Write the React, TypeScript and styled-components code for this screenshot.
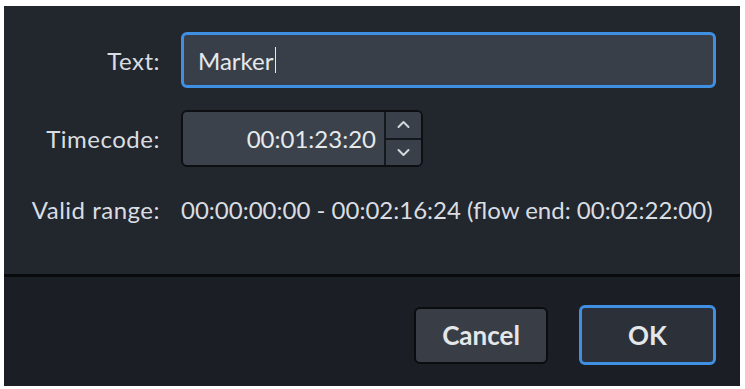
import React from "react";
import styled, { createGlobalStyle } from "styled-components";

const Global = createGlobalStyle`
  html, body { margin: 0; padding: 0; background: #ffffff; }
  body { font-family: "Lato", "Open Sans", sans-serif; }
`;

const Dialog = styled.div`
  margin: 6px 0 0 4px;
  width: 736px;
  height: 380px;
  display: flex;
  flex-direction: column;
  background: #22272d;
  color: #d9dde2;
`;

const Body = styled.div`
  flex: 1;
  display: grid;
  grid-template-columns: 130px 1fr;
  grid-auto-rows: min-content;
  column-gap: 21px;
  align-items: center;
  padding: 26px 24px 0 26px;
  row-gap: 22px;
`;

const Label = styled.div`
  font-size: 24px;
  letter-spacing: 0.5px;
  text-align: right;
  white-space: nowrap;
`;

const TextInput = styled.div`
  height: 56px;
  box-sizing: border-box;
  border: 3px solid #3f90e3;
  border-radius: 6px;
  background: #393f48;
  display: flex;
  align-items: center;
  padding-left: 14px;
  font-size: 24px;
  color: #e6e9ec;
`;

const Caret = styled.span`
  display: inline-block;
  width: 1px;
  height: 26px;
  background: #e6e9ec;
  margin-left: 1px;
`;

const Spin = styled.div`
  width: 242px;
  height: 57px;
  box-sizing: border-box;
  border: 2px solid #0d0f12;
  border-radius: 6px;
  background: #3b424b;
  display: flex;
  overflow: hidden;
`;

const SpinValue = styled.div`
  flex: 1;
  display: flex;
  align-items: center;
  justify-content: flex-end;
  padding-right: 8px;
  font-size: 24px;
  color: #e6e9ec;
`;

const SpinButtons = styled.div`
  width: 35px;
  border-left: 2px solid #15181c;
  display: flex;
  flex-direction: column;
`;

const SpinButton = styled.div<{ $top?: boolean }>`
  flex: 1;
  display: flex;
  align-items: center;
  justify-content: center;
  background: #3a4049;
  ${(p) => (p.$top ? "border-bottom: 2px solid #15181c;" : "")}
`;

const RangeRow = styled.div`
  font-size: 24px;
  white-space: nowrap;
  margin-top: 6px;
`;

const Separator = styled.div`
  height: 3px;
  background: #080a0c;
`;

const Footer = styled.div`
  height: 109px;
  background: #1b1f25;
  display: flex;
  justify-content: flex-end;
  align-items: center;
  gap: 31px;
  padding-right: 24px;
  padding-top: 7px;
  box-sizing: border-box;
`;

const Button = styled.div<{ $primary?: boolean }>`
  height: ${(p) => (p.$primary ? "60px" : "57px")};
  width: ${(p) => (p.$primary ? "137px" : "134px")};
  box-sizing: border-box;
  border-radius: 6px;
  border: ${(p) => (p.$primary ? "3px solid #3f90e3" : "2px solid #0a0c0e")};
  background: ${(p) => (p.$primary ? "#2b3039" : "#393e46")};
  display: flex;
  align-items: center;
  justify-content: center;
  font-size: 26px;
  font-weight: 700;
  color: #e4e7ea;
`;

const Chevron = ({ up }: { up?: boolean }) => (
  <svg width="13" height="9" viewBox="0 0 13 9">
    <path
      d={up ? "M1.5 7 L6.5 2 L11.5 7" : "M1.5 2 L6.5 7 L11.5 2"}
      fill="none"
      stroke="#d4d8dd"
      strokeWidth="2"
      strokeLinecap="round"
      strokeLinejoin="round"
    />
  </svg>
);

export default function App() {
  return (
    <>
      <Global />
      <Dialog>
        <Body>
          <Label>Text:</Label>
          <TextInput>
            Marker
            <Caret />
          </TextInput>
          <Label>Timecode:</Label>
          <div>
            <Spin>
              <SpinValue>00:01:23:20</SpinValue>
              <SpinButtons>
                <SpinButton $top>
                  <Chevron up />
                </SpinButton>
                <SpinButton>
                  <Chevron />
                </SpinButton>
              </SpinButtons>
            </Spin>
          </div>
          <RangeRow as={Label}>Valid range:</RangeRow>
          <RangeRow>00:00:00:00 - 00:02:16:24 (flow end: 00:02:22:00)</RangeRow>
        </Body>
        <Separator />
        <Footer>
          <Button>Cancel</Button>
          <Button $primary>OK</Button>
        </Footer>
      </Dialog>
    </>
  );
}
